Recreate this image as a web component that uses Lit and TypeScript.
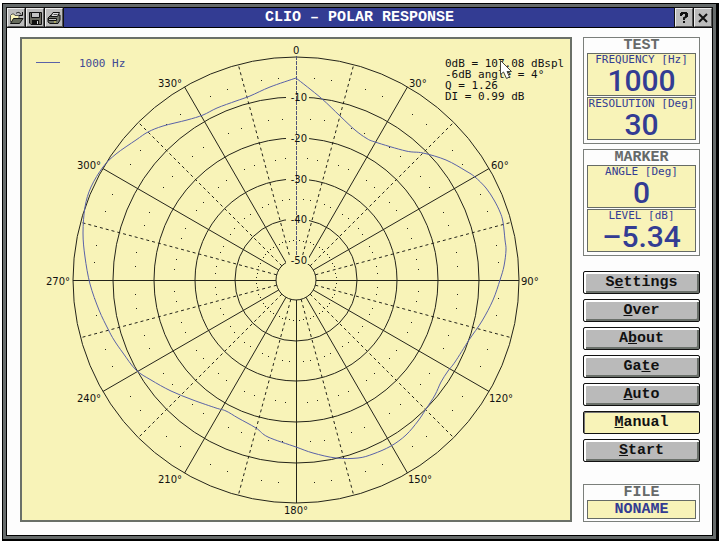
import { LitElement, html, svg, css } from "lit";
import { customElement, property } from "lit/decorators.js";

const CX = 296;
const CY = 280;
const RINGS = [20, 61, 101, 142, 183, 223];
const MID_RINGS = [40, 81, 122, 162, 203];

const polar = (deg: number, r: number): [number, number] => {
  const a = (deg * Math.PI) / 180;
  return [CX + r * Math.sin(a), CY - r * Math.cos(a)];
};

const RESPONSE: [number, number][] = [
  [296, 78], [321, 98], [340, 116], [355, 130], [366, 138], [375, 142], [406, 151],
  [423, 153], [446, 160], [466, 171], [475, 177], [486, 188], [494, 200], [500, 212],
  [503, 222], [505, 240], [506, 250], [504, 266], [500, 280], [493, 300], [482, 321],
  [469, 340], [455, 362], [448, 371], [441, 382], [435, 395], [426, 409], [418, 421],
  [406, 435], [391, 446], [373, 454], [358, 458], [336, 458], [313, 453], [296, 447],
  [268, 437], [256, 428], [238, 418], [226, 411], [216, 408], [193, 400],
  [171, 391], [151, 380], [136, 370], [123, 353], [114, 340], [108, 329], [99, 310],
  [90, 284], [85, 257], [83, 233], [85, 207], [91, 187], [103, 167], [116, 154],
  [136, 140], [148, 132], [163, 126], [187, 120], [203, 115], [217, 108], [236, 101],
  [250, 96], [270, 87], [296, 78],
];

/* Catmull-Rom spline through the points, with a corner kept at both ends. */
const smooth = (pts: [number, number][]): string =>
  pts.slice(1).reduce((d, p, n) => {
    const a = pts[Math.max(n - 1, 0)];
    const b = pts[n];
    const c = pts[Math.min(n + 2, pts.length - 1)];
    const x1 = b[0] + (p[0] - a[0]) / 6;
    const y1 = b[1] + (p[1] - a[1]) / 6;
    const x2 = p[0] - (c[0] - b[0]) / 6;
    const y2 = p[1] - (c[1] - b[1]) / 6;
    return `${d}C${x1} ${y1} ${x2} ${y2} ${p[0]} ${p[1]}`;
  }, `M${pts[0][0]} ${pts[0][1]}`);

const ANGLE_LABELS: [string, number, number][] = [
  ["0", 293, 54], ["30°", 409, 87], ["60°", 491, 169], ["90°", 521, 285],
  ["120°", 489, 402], ["150°", 408, 483], ["180°", 284, 514], ["210°", 158, 483],
  ["240°", 77, 402], ["270°", 46, 285], ["300°", 77, 169], ["330°", 158, 87],
];

const INFO = ["0dB = 107.08 dBspl", "-6dB angle = 4°", "Q = 1.26", "DI = 0.99 dB"];

@customElement("polar-chart")
export class PolarChart extends LitElement {
  static styles = css`
    :host { display: block; background: #f8f3b8; border: 2px solid #6a7068; }
    svg { display: block; width: 100%; height: auto; }
    .line { fill: none; stroke: #24241a; stroke-width: 1; }
    .solid { shape-rendering: crispEdges; }
    .dash { stroke-dasharray: 3 3; }
    .axis { fill: none; stroke: #50557a; stroke-dasharray: 4 1; }
    .gap { fill: #f8f3b8; }
    .dot { fill: #24241a; }
    .curve { fill: none; stroke: #5a62a8; stroke-width: 1; stroke-linejoin: round; }
    .label { font: 10px "DejaVu Sans", sans-serif; fill: #111; }
    .info { font: 11px "DejaVu Sans Mono", monospace; fill: #111; white-space: pre; }
    .legend { fill: #414a94; }
    .end { text-anchor: end; }
    .cursor { fill: #fff; stroke: #44443c; stroke-width: 1; }
  `;

  render() {
    const spokes = Array.from({ length: 23 }, (_, i) => (i + 1) * 15);
    const ticks = Array.from({ length: 72 }, (_, i) => i * 5).filter((d) => d % 15 !== 0);
    return html`
      <svg viewBox="22 39 548 481" role="img" aria-label="Polar response at 1000 Hz">
        ${RINGS.map((r) => svg`<circle class="line" cx=${CX} cy=${CY} r=${r} />`)}
        ${spokes.map((d) => {
          const [x1, y1] = polar(d, RINGS[0]);
          const [x2, y2] = polar(d, 223);
          const kind = d % 90 === 0 ? "line solid" : d % 30 === 0 ? "line" : "line dash";
          return svg`<line class=${kind} x1=${x1} y1=${y1} x2=${x2} y2=${y2} />`;
        })}
        ${MID_RINGS.map((r) =>
          ticks.map((d) => {
            const [x, y] = polar(d, r);
            return svg`<rect class="dot" x=${Math.round(x)} y=${Math.round(y)} width="1" height="1" />`;
          })
        )}
        ${RINGS.slice(0, 5).map(
          (r) => svg`<rect class="gap" x="286" y=${CY - r - 5} width="23" height="9" />`
        )}
        <line class="axis" x1="296.5" y1="56" x2="296.5" y2="257" />
        ${RINGS.slice(0, 5).map(
          (r, i) => svg`<text class="label end" x="307" y=${CY - r + 4}>${"-" + (50 - i * 10)}</text>`
        )}
        ${ANGLE_LABELS.map(([t, x, y]) => svg`<text class="label" x=${x} y=${y}>${t}</text>`)}
        <path class="curve" d=${smooth(RESPONSE)} />
        <line class="curve" x1="36" y1="62.5" x2="60" y2="62.5" />
        <text class="info legend" x="79" y="67">1000 Hz</text>
        ${INFO.map((t, i) => svg`<text class="info" x="445" y=${67 + i * 11}>${t}</text>`)}
        <path class="cursor" d="M500.5 60.5V74.500L503.500 72L506.500 78.500L509.500 77L507 71.500H511.500Z" />
      </svg>
    `;
  }
}

@customElement("readout-group")
export class ReadoutGroup extends LitElement {
  @property() heading = "";
  @property({ attribute: false }) items: { label: string; value: string }[] = [];

  static styles = css`
    :host { display: block; border: 1px solid #7b7f7b; padding: 1px 3px 3px; }
    .heading {
      margin: 0; font: bold 15px/14px "Liberation Mono", monospace;
      color: #666a6a; text-align: center;
    }
    .list { display: grid; gap: 1px; margin: 0; }
    .item { border: 1px solid #666b66; background: #f8f3b8; color: #333c93; text-align: center; white-space: nowrap; }
    .name { font: 11px/12px "DejaVu Sans Mono", monospace; }
    .value { margin: 0; font: 500 30px/29px Roboto, sans-serif; }
  `;

  render() {
    return html`
      <h2 class="heading">${this.heading}</h2>
      <dl class="list">
        ${this.items.map(
          (i) => html`<div class="item"><dt class="name">${i.label}</dt><dd class="value">${i.value}</dd></div>`
        )}
      </dl>
    `;
  }
}

const ACTIONS: [string, string, string][] = [
  ["S", "e", "ttings"], ["", "O", "ver"], ["A", "b", "out"], ["Ga", "t", "e"],
  ["", "A", "uto"], ["", "M", "anual"], ["", "S", "tart"],
];

@customElement("app-root")
export class AppRoot extends LitElement {
  static styles = css`
    :host { display: block; background: #fff; padding: 3px 0 3px 2px; }
    .window { border: 1px solid #000; border-right-width: 3px; border-bottom-width: 2px; background: #666b6b; padding: 3px; }
    .inner { border: 1px solid #000; background: #fdfdfd; }
    .bar {
      display: grid; grid-template-columns: 1fr auto 1fr;
      background: #333c93; border-bottom: 1px solid #000; height: 19px;
    }
    .tools { display: flex; gap: 1px; }
    .right { justify-content: flex-end; }
    .title {
      margin: 0; text-align: center; color: #fff;
      font: bold 15px/19px "Liberation Mono", monospace;
    }
    .tool {
      width: 18px; height: 19px; padding: 0; border: 1px solid; flex: none;
      border-color: #eee #555 #555 #eee; background: #bcbcbc;
      outline: 1px solid #111; outline-offset: 0; display: grid; place-items: center;
    }
    .tool svg { display: block; width: 16px; height: 16px; }
    .main { display: grid; grid-template-columns: minmax(0, 1fr) 117px; gap: 11px; padding: 9px 12px 13px 13px; }
    .side { display: flex; flex-direction: column; gap: 5px; }
    .actions { display: grid; gap: 5px; margin-top: 10px; }
    .action {
      height: 23px; padding: 0; border: 1px solid #111; border-radius: 2px; color: #111;
      font: bold 15px/19px "Liberation Mono", monospace; background: #bababa;
      box-shadow: inset 2px 2px #fff, inset -2px -2px #6a706a;
    }
    .active { background: #f8f3b8; box-shadow: inset 1px 1px #777; }
    .key { text-decoration: underline; text-underline-offset: 1px; }
    .file { margin-top: auto; border: 1px solid #7b7f7b; padding: 0 3px 2px; text-align: center; }
    .caption { margin: 0; font: bold 15px/15px "Liberation Mono", monospace; color: #666a6a; }
    .filename {
      margin: 0; border: 1px solid #666b66; background: #f8f3b8; color: #333c93;
      font: bold 15px/17px "Liberation Mono", monospace;
    }
  `;

  render() {
    return html`
      <div class="window">
        <div class="inner">
          <header class="bar">
            <div class="tools">
              <button class="tool" aria-label="Open">
                <svg viewBox="0 0 16 16">
                  <path d="M2.500 12V5.500L4 4h2l1 1.500h4V8" fill="#f8f3b8" stroke="#555" />
                  <path d="M2.500 13.500L5.500 8.500H15L11.500 13.500Z" fill="#666b5c" stroke="#111" />
                  <path d="M8 3.500c2-2 4-1 5 1M14.500 2v3.500H11" fill="none" stroke="#111" />
                </svg>
              </button>
              <button class="tool" aria-label="Save">
                <svg viewBox="0 0 16 16">
                  <path d="M2.500 2.500h12v12H4L2.500 13Z" fill="#6a6a60" stroke="#111" />
                  <path d="M4.500 2.500h8v5h-8z" fill="#c4c4c4" stroke="#111" />
                  <path d="M5 10h7v4H5z" fill="#111" />
                  <path d="M10 11h1v3h-1z" fill="#ddd" />
                </svg>
              </button>
              <button class="tool" aria-label="Print">
                <svg viewBox="0 0 16 16">
                  <path d="M2 8L5 5H14V10L12 13.500H4L2 12Z" fill="#6f736a" stroke="#111" />
                  <path d="M4.500 6.500L7 2.500H13.500L11.500 6.500Z" fill="#ddd" stroke="#111" />
                  <path d="M7.500 4.500h4" stroke="#555" />
                  <path d="M2.500 8.500h8v2h-8z" fill="#c0c0c0" stroke="#111" />
                  <path d="M8 12h2" stroke="#e8dc60" />
                </svg>
              </button>
            </div>
            <h1 class="title">CLIO – POLAR RESPONSE</h1>
            <div class="tools right">
              <button class="tool" aria-label="Help">
                <svg viewBox="0 0 16 16">
                  <path d="M5 6V4h1V3h4v1h1v2H10v1L8 8v2M8 11v2" fill="none" stroke="#111" stroke-width="2" />
                </svg>
              </button>
              <button class="tool" aria-label="Close">
                <svg viewBox="0 0 16 16">
                  <path d="M4 4l8 8M12 4l-8 8" fill="none" stroke="#111" stroke-width="2" />
                </svg>
              </button>
            </div>
          </header>
          <main class="main">
            <polar-chart></polar-chart>
            <aside class="side">
              <readout-group
                heading="TEST"
                .items=${[{ label: "FREQUENCY [Hz]", value: "1000" }, { label: "RESOLUTION [Deg]", value: "30" }]}
              ></readout-group>
              <readout-group
                heading="MARKER"
                .items=${[{ label: "ANGLE [Deg]", value: "0" }, { label: "LEVEL [dB]", value: "–5.34" }]}
              ></readout-group>
              <div class="actions">
                ${ACTIONS.map(
                  ([a, k, b]) => html`<button class="action ${k === "M" ? "active" : ""}">${a}<span class="key">${k}</span>${b}</button>`
                )}
              </div>
              <section class="file">
                <h2 class="caption">FILE</h2>
                <p class="filename">NONAME</p>
              </section>
            </aside>
          </main>
        </div>
      </div>
    `;
  }
}
